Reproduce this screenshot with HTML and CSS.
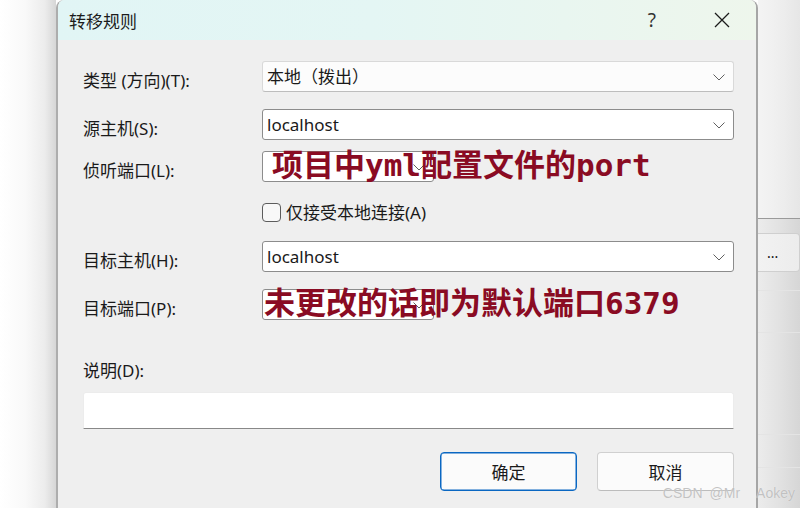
FILE: index.html
```html
<!DOCTYPE html>
<html lang="zh-CN">
<head>
<meta charset="UTF-8" />
<title>转移规则</title>
<link rel="stylesheet" href="styles.css">
</head>
<body>
  <div class="desk">
    <div class="shade"></div>

    <div class="dialog">
      <div class="titlebar">
        <span class="title">转移规则</span>
        <span class="help">?</span>
        <span class="close">
          <svg width="16" height="16" viewBox="0 0 16 16"><path d="M1 1 L15 15 M15 1 L1 15" stroke="#1b1b1b" stroke-width="1.3" fill="none"/></svg>
        </span>
      </div>

      <div class="content">
        <div class="row row-type">
          <label>类型 (方向)(T):</label>
          <div class="combo list">本地（拨出）
            <svg class="chev" width="12" height="7" viewBox="0 0 12 7"><polyline points="0.5,0.5 6,6 11.5,0.5" fill="none" stroke="#606060" stroke-width="1"/></svg>
          </div>
        </div>

        <div class="row row-src">
          <label>源主机(S):</label>
          <div class="combo">localhost
            <svg class="chev" width="12" height="7" viewBox="0 0 12 7"><polyline points="0.5,0.5 6,6 11.5,0.5" fill="none" stroke="#606060" stroke-width="1"/></svg>
          </div>
        </div>

        <div class="row row-listen">
          <label>侦听端口(L):</label>
          <div class="cell">
            <div class="combo short">
              <svg class="chev" width="12" height="7" viewBox="0 0 12 7"><polyline points="0.5,0.5 6,6 11.5,0.5" fill="none" stroke="#606060" stroke-width="1"/></svg>
            </div>
            <!-- 标注 -->
            <span class="note note-listen">项目中yml配置文件的port</span>
          </div>
        </div>

        <div class="row row-check">
          <label></label>
          <div class="check"><span class="box"></span>仅接受本地连接(A)</div>
        </div>

        <div class="row row-dst">
          <label>目标主机(H):</label>
          <div class="combo">localhost
            <svg class="chev" width="12" height="7" viewBox="0 0 12 7"><polyline points="0.5,0.5 6,6 11.5,0.5" fill="none" stroke="#606060" stroke-width="1"/></svg>
          </div>
        </div>

        <div class="row row-port">
          <label>目标端口(P):</label>
          <div class="cell">
            <div class="combo short">
              <svg class="chev" width="12" height="7" viewBox="0 0 12 7"><polyline points="0.5,0.5 6,6 11.5,0.5" fill="none" stroke="#606060" stroke-width="1"/></svg>
            </div>
            <span class="note note-port">未更改的话即为默认端口6379</span>
          </div>
        </div>

        <div class="desc-label">说明(D):</div>
        <div class="textbox"></div>

        <div class="buttons">
          <button class="btn primary">确定</button>
          <button class="btn">取消</button>
        </div>
      </div>
    </div>

    <div class="side">
      <div class="side-top"></div>
      <div class="side-btn">...</div>
      <div class="side-line l1"></div>
      <div class="side-line l2"></div>
      <div class="side-line l3"></div>
      <div class="side-line l4"></div>
    </div>
  </div>

  <div class="watermark"><span>CSDN</span><span>@Mr</span><span class="name">Aokey</span></div>
</body>
</html>
```

FILE: styles.css
```css
/* 页面 */
body {
  margin: 0;
  width: 800px;
  height: 508px;
  overflow: hidden;
  position: relative;
  font-family: "Noto Sans", "Noto Sans CJK SC", sans-serif;
  font-size: 17px;
  color: #1a1a1a;
  background: #fff;
}

.desk {
  display: flex;
  height: 508px;
}

/* 左侧阴影 */
.shade {
  width: 56px;
  flex: none;
  background: linear-gradient(90deg, #ffffff 0%, #f9f9f9 45%, #ececec 80%, #d6d6d6 100%);
}

/* 对话框 */
.dialog {
  width: 702px;
  flex: none;
  display: flex;
  flex-direction: column;
  background: #efefef;
  border-left: 2px solid #adadad;
  border-right: 2px solid #a6a6a6;
  border-top-left-radius: 8px;
  border-top-right-radius: 8px;
  overflow: hidden;
  box-sizing: border-box;
}

.titlebar {
  height: 40px;
  flex: none;
  display: flex;
  align-items: center;
  padding-left: 11px;
  background: linear-gradient(90deg, #e1f5f5 0%, #e4f6f4 45%, #eef6ec 100%);
}
.title {
  font-family: "Noto Sans CJK SC", sans-serif;
  font-size: 17px;
  color: #1c1c1c;
  flex: 1;
  padding-top: 1px;
}
.help {
  font-size: 19px;
  color: #333;
  margin-right: 58px;
}
.close {
  display: flex;
  margin-right: 26px;
}

.content {
  padding: 21px 22px 0 25px;
  display: flex;
  flex-direction: column;
}

.row {
  display: flex;
  align-items: center;
}
.row label {
  width: 179px;
  flex: none;
  padding-top: 5px;
}

.row-src { margin-top: 17px; }
.row-listen { margin-top: 11px; }
.row-check { margin-top: 20px; height: 20px; }
.row-dst { margin-top: 19px; }
.row-port { margin-top: 17px; }

/* 下拉框 */
.combo {
  position: relative;
  flex: 1;
  height: 31px;
  box-sizing: border-box;
  border: 1px solid #8c8c8c;
  border-radius: 3px;
  background: #fff;
  padding-left: 4px;
  display: flex;
  align-items: center;
  line-height: 1;
}
.combo.list {
  background: #fcfcfc;
  border-color: #d9d9d9;
  border-bottom-color: #bdbdbd;
}
.combo.short {
  width: 172px;
  flex: none;
}
.chev {
  position: absolute;
  right: 8px;
  top: 12px;
}

.cell {
  position: relative;
  flex: 1;
  display: flex;
}

/* 红色标注 */
.note {
  position: absolute;
  font-family: "DejaVu Sans Mono", "Noto Sans CJK SC", monospace;
  font-weight: 700;
  font-size: 31px;
  line-height: 1;
  color: #8a0b23;
  white-space: nowrap;
}
.note-listen {
  left: 10px;
  top: -1px;
}
.note-port {
  left: 2px;
  top: -1px;
}

/* 复选框 */
.check {
  display: flex;
  align-items: center;
  gap: 5px;
  line-height: 1;
}
.box {
  width: 19px;
  height: 19px;
  box-sizing: border-box;
  border: 1px solid #5c5c5c;
  border-radius: 4px;
  background: #f8f8f8;
}

.desc-label {
  margin-top: 41px;
  line-height: 20px;
}

.textbox {
  margin-top: 11px;
  height: 37px;
  box-sizing: border-box;
  background: #fff;
  border: 1px solid #ececec;
  border-bottom: 1px solid #888;
  border-radius: 3px 3px 0 0;
}

.buttons {
  margin-top: 23px;
  display: flex;
  justify-content: flex-end;
  gap: 20px;
}
.btn {
  width: 137px;
  height: 39px;
  font-family: "Noto Sans CJK SC", sans-serif;
  font-size: 17px;
  color: #1a1a1a;
  background: #fbfbfb;
  border: 1px solid #d0d0d0;
  border-bottom-color: #bcbcbc;
  border-radius: 4px;
}
.btn.primary {
  border: 1px solid #0a67c2;
  box-shadow: inset 0 0 0 0.5px #0a67c2;
}

/* 右侧窗口 */
.side {
  flex: 1;
  display: flex;
  flex-direction: column;
  position: relative;
  background: linear-gradient(90deg, #ececec 0%, #e2e2e2 50%, #d6d6d6 100%);
}
.side-top {
  height: 218px;
  flex: none;
  background: linear-gradient(90deg, #f4f4f4 0%, #ededed 60%, #e6e6e6 100%);
  border-bottom: 1px solid #9a9a9a;
}
.side-btn {
  margin-top: 14px;
  height: 39px;
  box-sizing: border-box;
  background: linear-gradient(90deg, #f2f2f2, #ececec);
  border: 1px solid #cfcfcf;
  border-left: none;
  border-radius: 0 4px 4px 0;
  display: flex;
  align-items: center;
  padding-left: 9px;
  font-size: 14px;
  color: #111;
}
.side-line {
  position: absolute;
  left: 0;
  right: 0;
  height: 1px;
  background: #e4e4e4;
}
.l1 { top: 290px; }
.l2 { top: 332px; }
.l3 { top: 434px; }
.l4 { top: 467px; }

/* 水印 */
.watermark {
  position: absolute;
  right: 5px;
  top: 485px;
  display: flex;
  gap: 7px;
  white-space: nowrap;
  font-family: "Liberation Sans", sans-serif;
  font-size: 14px;
  color: rgba(185, 185, 185, 0.85);
  text-shadow: 0 0 1px rgba(255, 255, 255, 0.6);
}
.watermark .name {
  margin-left: 9px;
}
```
